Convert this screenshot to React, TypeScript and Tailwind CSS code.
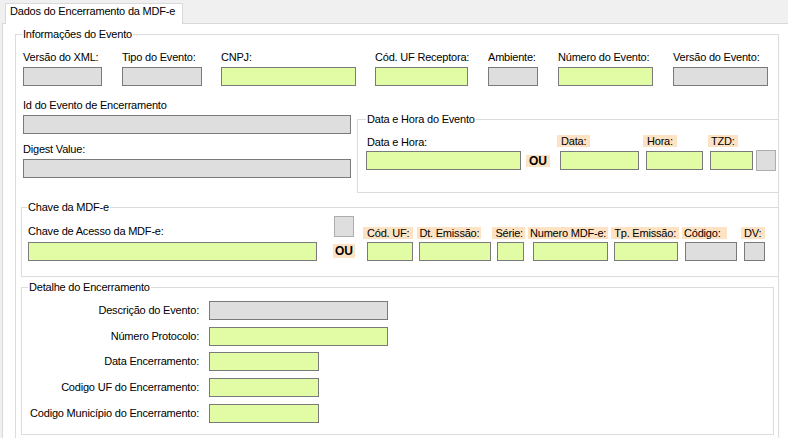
import React from "react";

const G = "bg-[#e1fca4]";
const GR = "bg-[#dedede]";
const OR = "bg-[#fde3c3]";

export default function App() {
  return (
    <div className="w-[788px] h-[438px] overflow-hidden bg-[#f0f0f0] text-[11px] leading-[13px] tracking-[-0.2px] text-black font-['Liberation_Sans',Arial,sans-serif]">
      {/* tab strip */}
      <div className="h-[23px] flex items-end pl-[5px]">
        <div className="relative z-10 -mb-px h-[21px] w-[178px] border border-b-0 border-[#d9d9d9] bg-white pl-[4px] pt-[1px] whitespace-nowrap">
          Dados do Encerramento da MDF-e
        </div>
      </div>

      {/* tab page */}
      <div className="ml-[2px] h-[415px] border-t border-l border-[#d9d9d9] bg-white pl-[12px] pt-[10px]">
        <div className="relative w-[764px] h-[420px] border border-[#dcdcdc] flex flex-col">
          <span className="absolute left-[6px] -top-[7px] bg-white px-[1px] whitespace-nowrap">Informações do Evento</span>

          {/* row 1 */}
          <div className="flex mt-[16px] whitespace-nowrap">
            <div className="ml-[7px] w-[79px] flex flex-col">
              <span>Versão do XML:</span>
              <div className={`mt-[3px] h-[19px] border border-[#7a7a7a] ${GR}`} />
            </div>
            <div className="ml-[20px] w-[80px] flex flex-col">
              <span>Tipo do Evento:</span>
              <div className={`mt-[3px] h-[19px] border border-[#7a7a7a] ${GR}`} />
            </div>
            <div className="ml-[19px] w-[135px] flex flex-col">
              <span>CNPJ:</span>
              <div className={`mt-[3px] h-[19px] border border-[#7a7a7a] ${G}`} />
            </div>
            <div className="ml-[19px] w-[93px] flex flex-col">
              <span>Cód. UF Receptora:</span>
              <div className={`mt-[3px] h-[19px] border border-[#7a7a7a] ${G}`} />
            </div>
            <div className="ml-[20px] w-[50px] flex flex-col">
              <span>Ambiente:</span>
              <div className={`mt-[3px] h-[19px] border border-[#7a7a7a] ${GR}`} />
            </div>
            <div className="ml-[20px] w-[95px] flex flex-col">
              <span>Número do Evento:</span>
              <div className={`mt-[3px] h-[19px] border border-[#7a7a7a] ${G}`} />
            </div>
            <div className="ml-[20px] w-[95px] flex flex-col">
              <span>Versão do Evento:</span>
              <div className={`mt-[3px] h-[19px] border border-[#7a7a7a] ${GR}`} />
            </div>
          </div>

          {/* row 2 */}
          <div className="flex items-start mt-[13px] whitespace-nowrap">
            <div className="ml-[7px] w-[328px] flex flex-col">
              <span>Id do Evento de Encerramento</span>
              <div className={`mt-[3px] h-[19px] border border-[#7a7a7a] ${GR}`} />
              <span className="mt-[9px]">Digest Value:</span>
              <div className={`mt-[3px] h-[19px] border border-[#7a7a7a] ${GR}`} />
            </div>

            <div className="relative ml-[6px] mt-[20px] flex-1 h-[74px] border border-r-0 border-[#dcdcdc] flex items-start">
              <span className="absolute left-[8px] -top-[7px] bg-white px-[1px]">Data e Hora do Evento</span>
              <div className="ml-[8px] mt-[16px] w-[155px] flex flex-col">
                <span className="pl-[1px]">Data e Hora:</span>
                <div className={`mt-[2px] h-[19px] border border-[#7a7a7a] ${G}`} />
              </div>
              <div className={`ml-[5px] mt-[35px] w-[24px] h-[12px] ${OR} flex items-center justify-center font-bold text-[12px] tracking-normal`}>
                OU
              </div>
              <div className="ml-[7px] mt-[15px] flex flex-col items-start">
                <span className={`px-[4px] h-[12px] leading-[12px] ${OR}`}>Data:</span>
                <div className={`ml-[3px] mt-[4px] w-[79px] h-[19px] border border-[#7a7a7a] ${G}`} />
              </div>
              <div className="ml-[4px] mt-[15px] flex flex-col items-start">
                <span className={`px-[4px] h-[12px] leading-[12px] ${OR}`}>Hora:</span>
                <div className={`ml-[3px] mt-[4px] w-[57px] h-[19px] border border-[#7a7a7a] ${G}`} />
              </div>
              <div className="ml-[5px] mt-[15px] flex flex-col items-start">
                <span className={`px-[3px] h-[12px] leading-[12px] ${OR}`}>TZD:</span>
                <div className={`ml-[2px] mt-[4px] w-[43px] h-[19px] border border-[#7a7a7a] ${G}`} />
              </div>
              <div className={`ml-[3px] mt-[30px] w-[20px] h-[21px] border border-[#adadad] ${GR}`} />
            </div>
          </div>

          {/* Chave da MDF-e */}
          <div className="relative mt-[14px] ml-[5px] h-[70px] border border-r-0 border-[#dcdcdc] flex items-start whitespace-nowrap">
            <span className="absolute left-[5px] -top-[7px] bg-white px-[1px]">Chave da MDF-e</span>
            <div className="ml-[6px] mt-[17px] w-[289px] flex flex-col">
              <span>Chave de Acesso da MDF-e:</span>
              <div className={`mt-[4px] h-[19px] border border-[#7a7a7a] ${G}`} />
            </div>
            <div className="ml-[16px] mt-[8px] w-[22px] flex flex-col">
              <div className={`ml-[1px] w-[20px] h-[21px] border border-[#adadad] ${GR}`} />
              <div className={`mt-[7px] w-[22px] h-[14px] ${OR} flex items-center justify-center font-bold text-[12px] tracking-normal`}>
                OU
              </div>
            </div>
            <div className="ml-[8px] mt-[19px] flex flex-col items-start">
              <span className={`px-[4px] h-[12px] leading-[12px] ${OR}`}>Cód. UF:</span>
              <div className={`ml-[4px] mt-[3px] w-[46px] h-[19px] border border-[#7a7a7a] ${G}`} />
            </div>
            <div className="ml-[4px] mt-[19px] flex flex-col items-start">
              <span className={`px-[2px] h-[12px] leading-[12px] ${OR}`}>Dt. Emissão:</span>
              <div className={`ml-[2px] mt-[3px] w-[72px] h-[19px] border border-[#7a7a7a] ${G}`} />
            </div>
            <div className="ml-[1px] mt-[19px] flex flex-col items-start">
              <span className={`pl-[3px] pr-[2px] h-[12px] leading-[12px] ${OR}`}>Série:</span>
              <div className={`ml-[5px] mt-[3px] w-[27px] h-[19px] border border-[#7a7a7a] ${G}`} />
            </div>
            <div className="ml-[3px] mt-[19px] flex flex-col items-start">
              <span className={`px-[2px] h-[12px] leading-[12px] ${OR}`}>Numero MDF-e:</span>
              <div className={`ml-[5px] mt-[3px] w-[75px] h-[19px] border border-[#7a7a7a] ${G}`} />
            </div>
            <div className="ml-[3px] mt-[19px] flex flex-col items-start">
              <span className={`px-[3px] h-[12px] leading-[12px] ${OR}`}>Tp. Emissão:</span>
              <div className={`ml-[3px] mt-[3px] w-[64px] h-[19px] border border-[#7a7a7a] ${G}`} />
            </div>
            <div className="ml-[3px] mt-[19px] flex flex-col items-start">
              <span className={`pl-[2px] pr-[6px] h-[12px] leading-[12px] ${OR}`}>Código:</span>
              <div className={`ml-[3px] mt-[3px] w-[52px] h-[19px] border border-[#7a7a7a] ${GR}`} />
            </div>
            <div className="ml-[4px] mt-[19px] flex flex-col items-start">
              <span className={`pl-[3px] pr-[4px] h-[12px] leading-[12px] ${OR}`}>DV:</span>
              <div className={`ml-[3px] mt-[3px] w-[21px] h-[19px] border border-[#7a7a7a] ${GR}`} />
            </div>
          </div>

          {/* Detalhe do Encerramento */}
          <div className="relative mt-[10px] ml-[5px] w-[753px] h-[148px] border border-[#dcdcdc] flex flex-col pt-[13px] whitespace-nowrap">
            <span className="absolute left-[6px] -top-[7px] bg-white px-[1px]">Detalhe do Encerramento</span>
            <div className="flex items-center">
              <span className="w-[177px] text-right">Descrição do Evento:</span>
              <div className={`ml-[10px] w-[179px] h-[19px] border border-[#7a7a7a] ${GR}`} />
            </div>
            <div className="flex items-center mt-[7px]">
              <span className="w-[177px] text-right">Número Protocolo:</span>
              <div className={`ml-[10px] w-[179px] h-[19px] border border-[#7a7a7a] ${G}`} />
            </div>
            <div className="flex items-center mt-[6px]">
              <span className="w-[177px] text-right">Data Encerramento:</span>
              <div className={`ml-[10px] w-[110px] h-[19px] border border-[#7a7a7a] ${G}`} />
            </div>
            <div className="flex items-center mt-[7px]">
              <span className="w-[177px] text-right">Codigo UF do Encerramento:</span>
              <div className={`ml-[10px] w-[110px] h-[19px] border border-[#7a7a7a] ${G}`} />
            </div>
            <div className="flex items-center mt-[7px]">
              <span className="w-[177px] text-right">Codigo Município do Encerramento:</span>
              <div className={`ml-[10px] w-[110px] h-[19px] border border-[#7a7a7a] ${G}`} />
            </div>
          </div>
        </div>
      </div>
    </div>
  );
}
